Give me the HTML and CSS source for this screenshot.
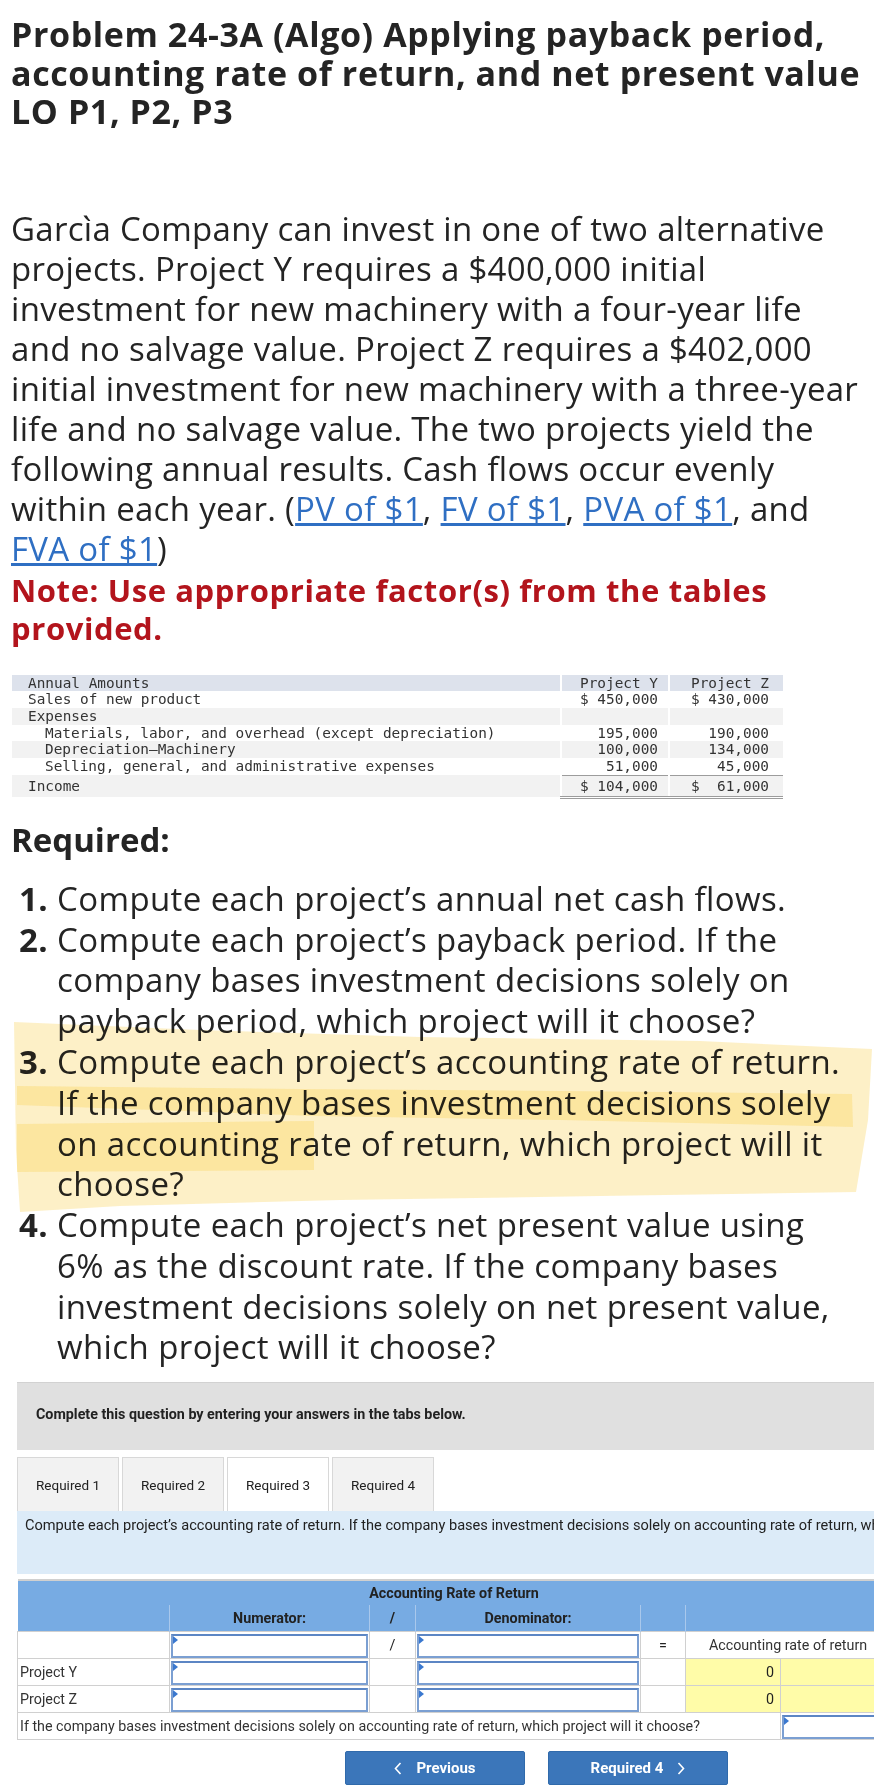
FILE: index.html
```html
<!DOCTYPE html>
<html lang="en">
<head>
    <meta charset="UTF-8">
    <meta name="viewport" content="width=device-width, initial-scale=1.0">
    <title>Problem 24-3A (Algo)</title>
    <link rel="stylesheet" href="styles.css">
</head>
<body>
    <div class="page">
        <h1 class="title">Problem 24-3A (Algo) Applying payback period, accounting rate of return, and net present value <span class="title-lo">LO P1, P2, P3</span></h1>

        <p class="intro">Garcìa Company can invest in one of two alternative projects. Project Y requires a $400,000 initial investment for new machinery with a four-year life and no salvage value. Project Z requires a $402,000 initial investment for new machinery with a three-year life and no salvage value. The two projects yield the following annual results. Cash flows occur evenly within each year. (<a href="#">PV of $1</a>, <a href="#">FV of $1</a>, <a href="#">PVA of $1</a>, and <a href="#">FVA of $1</a>)</p>
        <p class="note">Note: Use appropriate factor(s) from the tables provided.</p>

        <table class="amounts">
            <tr class="head">
                <td class="label">Annual Amounts</td>
                <td class="num">Project Y</td>
                <td class="num num-z">Project Z</td>
            </tr>
            <tr>
                <td class="label">Sales of new product</td>
                <td class="num">$ 450,000</td>
                <td class="num num-z">$ 430,000</td>
            </tr>
            <tr class="stripe">
                <td class="label">Expenses</td>
                <td class="num"></td>
                <td class="num num-z"></td>
            </tr>
            <tr>
                <td class="label indent">Materials, labor, and overhead (except depreciation)</td>
                <td class="num">195,000</td>
                <td class="num num-z">190,000</td>
            </tr>
            <tr class="stripe">
                <td class="label indent">Depreciation—Machinery</td>
                <td class="num">100,000</td>
                <td class="num num-z">134,000</td>
            </tr>
            <tr class="subtotal">
                <td class="label indent">Selling, general, and administrative expenses</td>
                <td class="num">51,000</td>
                <td class="num num-z">45,000</td>
            </tr>
            <tr class="stripe total">
                <td class="label">Income</td>
                <td class="num">$ 104,000</td>
                <td class="num num-z">$  61,000</td>
            </tr>
        </table>

        <h2 class="required">Required:</h2>
        <ol class="tasks">
            <li>Compute each project’s annual net cash flows.</li>
            <li>Compute each project’s payback period. If the company bases investment decisions solely on payback period, which project will it choose?</li>
            <li>Compute each project’s accounting rate of return. If the company bases investment decisions solely on accounting rate of return, which project will it choose?</li>
            <li>Compute each project’s net present value using 6% as the discount rate. If the company bases investment decisions solely on net present value, which project will it choose?</li>
        </ol>

        <!-- marker strokes someone drew over item 3 -->
        <svg class="marker" width="874" height="1230" viewBox="0 0 874 1230">
            <path d="M14 1022 L200 1030 L420 1037 L700 1041 L872 1049 L868 1120 L856 1192 L600 1196 L340 1200 L120 1206 L20 1212 L16 1150 Z"/>
            <path d="M17 1086 L300 1089 L560 1091 L852 1094 L853 1127 L560 1120 L314 1116 L17 1105 Z"/>
            <path d="M17 1124 L314 1121 L314 1170 L17 1172 Z"/>
        </svg>
    </div>

    <div class="quiz">
        <div class="prompt">Complete this question by entering your answers in the tabs below.</div>

        <div class="tabs">
            <div class="tab">Required 1</div>
            <div class="tab">Required 2</div>
            <div class="tab active">Required 3</div>
            <div class="tab">Required 4</div>
        </div>

        <div class="instructions">Compute each project’s accounting rate of return. If the company bases investment decisions solely on accounting rate of return, which project will it choose?</div>

        <table class="arr">
            <colgroup>
                <col class="c-label">
                <col class="c-num">
                <col class="c-op">
                <col class="c-den">
                <col class="c-eq">
                <col class="c-res">
                <col class="c-unit">
            </colgroup>
            <tr class="arr-title">
                <th colspan="7">Accounting Rate of Return</th>
            </tr>
            <tr class="arr-head">
                <th></th>
                <th>Numerator:</th>
                <th>/</th>
                <th>Denominator:</th>
                <th></th>
                <th colspan="2"></th>
            </tr>
            <tr>
                <td></td>
                <td class="entry"><span class="field"></span></td>
                <td class="op">/</td>
                <td class="entry"><span class="field"></span></td>
                <td class="op">=</td>
                <td class="caption" colspan="2">Accounting rate of return</td>
            </tr>
            <tr>
                <td class="name">Project Y</td>
                <td class="entry"><span class="field"></span></td>
                <td></td>
                <td class="entry"><span class="field"></span></td>
                <td></td>
                <td class="result">0</td>
                <td class="result"></td>
            </tr>
            <tr>
                <td class="name">Project Z</td>
                <td class="entry"><span class="field"></span></td>
                <td></td>
                <td class="entry"><span class="field"></span></td>
                <td></td>
                <td class="result">0</td>
                <td class="result"></td>
            </tr>
            <tr>
                <td class="name" colspan="6">If the company bases investment decisions solely on accounting rate of return, which project will it choose?</td>
                <td class="entry"><span class="field"></span></td>
            </tr>
        </table>

        <div class="nav">
            <div class="btn">
                <svg width="8" height="13" viewBox="0 0 8 13"><polyline points="6.5,1 1.5,6.5 6.5,12" fill="none" stroke="#fff" stroke-width="1.6"/></svg>
                Previous
            </div>
            <div class="btn">
                Required 4
                <svg width="8" height="13" viewBox="0 0 8 13"><polyline points="1.5,1 6.5,6.5 1.5,12" fill="none" stroke="#fff" stroke-width="1.6"/></svg>
            </div>
        </div>
    </div>
</body>
</html>
```

FILE: styles.css
```css
body {
    margin: 0;
    background: #ffffff;
    color: #242424;
    font-family: "Open Sans", Lato, sans-serif;
}

.page {
    position: relative;
    padding: 15px 8px 0 11px;
}

.title {
    margin: 0;
    font-size: 34px;
    line-height: 38.5px;
    letter-spacing: 0.6px;
    font-weight: 700;
}
.title-lo { display: block; }

.intro {
    margin: 78px 0 0;
    font-size: 33px;
    line-height: 40px;
    letter-spacing: 0.3px;
}
.intro a {
    color: #2f6fc3;
    text-decoration: underline;
}

.note {
    margin: 2px 0 0;
    font-size: 31px;
    line-height: 38px;
    letter-spacing: 0.6px;
    font-weight: 700;
    color: #b3141c;
}

/* data table */
.amounts {
    margin: 28px 0 0 1px;
    width: 771px;
    border-collapse: collapse;
    font-family: "DejaVu Sans Mono", monospace;
    font-size: 14.4px;
    color: #333;
}
.amounts td {
    padding: 0;
    height: 16.7px;
    line-height: 16.7px;
    white-space: pre;
}
.amounts .label { padding-left: 16px; }
.amounts .indent { padding-left: 33px; }
.amounts .num {
    width: 96px;
    padding-right: 10px;
    text-align: right;
    border-left: 2px solid #fff;
}
.amounts .num-z { width: 99px; padding-right: 14px; }
.amounts .head td { background: #dde2ec; }
.amounts .stripe td { background: #f2f2f2; }
.amounts .subtotal .num { border-bottom: 1px solid #9c9c9c; }
.amounts .total td {
    height: 20px;
    line-height: 20px;
}
.amounts .total .num { border-bottom: 3px double #9c9c9c; }

.required {
    margin: 21px 0 0;
    font-size: 33px;
    line-height: 40px;
    font-weight: 700;
}

.tasks {
    margin: 19px 21px 0 0;
    padding-left: 46px;
    font-size: 33px;
    line-height: 40.8px;
    letter-spacing: 0.4px;
}
.tasks li::marker { font-weight: 700; }

.marker {
    position: absolute;
    top: 0;
    left: 0;
    pointer-events: none;
    mix-blend-mode: multiply;
}
.marker path {
    fill: rgb(250, 205, 70);
    opacity: 0.3;
}

/* answer area */
.quiz {
    width: 857px;
    margin: 14px 0 0 17px;
    overflow: hidden;
    font-family: Roboto, "Liberation Sans", sans-serif;
    color: #222;
}

.prompt {
    box-sizing: border-box;
    width: 1000px;
    height: 68px;
    padding: 23px 0 0 19px;
    background: #e0e0e0;
    border-top: 1px solid #d2d2d2;
    font-size: 14.3px;
    font-weight: 700;
}

.tabs {
    display: flex;
    gap: 3px;
    margin-top: 7px;
    height: 54px;
}
.tab {
    box-sizing: border-box;
    width: 102px;
    padding-left: 18px;
    display: flex;
    align-items: center;
    background: #f2f2f2;
    border: 1px solid #d8d8d8;
    border-bottom: none;
    font-size: 13.5px;
}
.tab.active { background: #fff; }

.instructions {
    box-sizing: border-box;
    width: 1100px;
    height: 63px;
    padding: 6px 0 0 8px;
    background: #dcebf8;
    font-size: 14.6px;
    line-height: 17px;
    white-space: nowrap;
}

.arr {
    margin-top: 5px;
    width: 873px;
    table-layout: fixed;
    border-collapse: collapse;
    border-top: 2px solid #d0d0d0;
    font-size: 14.3px;
}
.c-label { width: 152px; }
.c-num { width: 200px; }
.c-op { width: 46px; }
.c-den { width: 225px; }
.c-eq { width: 45px; }
.c-res { width: 95px; }
.c-unit { width: 110px; }

.arr th {
    background: #77abe3;
    font-weight: 700;
    padding: 0;
}
.arr-title th { height: 24px; }
.arr-head th {
    height: 26px;
    border-left: 1px solid #a9c8ec;
}
.arr-head th:first-child { border-left: none; }
.arr td {
    height: 25px;
    padding: 0;
    border: 1px solid #d0d0d0;
}
.arr .op { text-align: center; }
.arr .caption {
    text-align: center;
    color: #333;
}
.arr .name {
    padding-left: 2px;
    color: #333;
    white-space: nowrap;
}
.arr .result {
    background: #fffca8;
    text-align: right;
    padding-right: 6px;
}
.arr .entry { padding: 1px 1px 0; }

.field {
    position: relative;
    display: block;
    box-sizing: border-box;
    height: 24px;
    background: #fff;
    border: 2px solid #7b9fd2;
    border-top-color: #5c86c4;
}
.field::before {
    content: "";
    position: absolute;
    top: 0;
    left: 0;
    border-top: 4px solid transparent;
    border-bottom: 4px solid transparent;
    border-left: 5px solid #3a78cf;
}

.nav {
    display: flex;
    gap: 23px;
    margin: 11px 0 10px 328px;
}
.btn {
    box-sizing: border-box;
    width: 180px;
    height: 34px;
    display: flex;
    align-items: center;
    justify-content: center;
    gap: 14px;
    background: #3b76ba;
    border: 1px solid #306aab;
    border-radius: 2px;
    color: #fff;
    font-size: 15px;
    font-weight: 700;
}
```
